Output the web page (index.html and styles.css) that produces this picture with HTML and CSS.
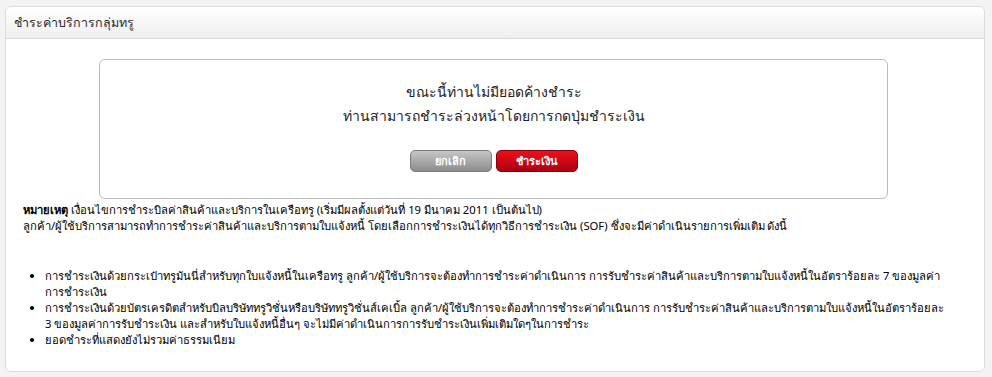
FILE: index.html
```html
<!DOCTYPE html>
<html>
<head>
  <meta charset="utf-8">
  <title>ชำระค่าบริการกลุ่มทรู</title>
  <link rel="stylesheet" href="styles.css">
</head>
<body>
  <div class="panel">
    <div class="panel-head">ชำระค่าบริการกลุ่มทรู</div>
    <div class="panel-body">
      <div class="notice">
        <p class="notice-line">ขณะนี้ท่านไม่มียอดค้างชำระ</p>
        <p class="notice-line">ท่านสามารถชำระล่วงหน้าโดยการกดปุ่มชำระเงิน</p>
        <div class="actions">
          <a href="#" class="btn btn-gray">ยกเลิก</a>
          <a href="#" class="btn btn-red">ชำระเงิน</a>
        </div>
      </div>

      <div class="remark">
        <p><b>หมายเหตุ</b> เงื่อนไขการชำระบิลค่าสินค้าและบริการในเครือทรู (เริ่มมีผลตั้งแต่วันที่ 19 มีนาคม 2011 เป็นต้นไป)<br>
        ลูกค้า/ผู้ใช้บริการสามารถทำการชำระค่าสินค้าและบริการตามใบแจ้งหนี้ โดยเลือกการชำระเงินได้ทุกวิธีการชำระเงิน (SOF) ซึ่งจะมีค่าดำเนินรายการเพิ่มเติม ดังนี้</p>
        <ul>
          <li>การชำระเงินด้วยกระเป๋าทรูมันนี่สำหรับทุกใบแจ้งหนี้ในเครือทรู ลูกค้า/ผู้ใช้บริการจะต้องทำการชำระค่าดำเนินการ การรับชำระค่าสินค้าและบริการตามใบแจ้งหนี้ในอัตราร้อยละ 7 ของมูลค่าการชำระเงิน</li>
          <li>การชำระเงินด้วยบัตรเครดิตสำหรับบิลบริษัททรูวิชั่นหรือบริษัททรูวิชั่นส์เคเบิ้ล ลูกค้า/ผู้ใช้บริการจะต้องทำการชำระค่าดำเนินการ การรับชำระค่าสินค้าและบริการตามใบแจ้งหนี้ในอัตราร้อยละ 3 ของมูลค่าการรับชำระเงิน และสำหรับใบแจ้งหนี้อื่นๆ จะไม่มีค่าดำเนินการการรับชำระเงินเพิ่มเติมใดๆในการชำระ</li>
          <li>ยอดชำระที่แสดงยังไม่รวมค่าธรรมเนียม</li>
        </ul>
      </div>
    </div>
  </div>
</body>
</html>
```

FILE: styles.css
```css
body {
  margin: 0;
  padding: 6px 7px 6px 5px;
  background: #f3f3f3;
  font-family: Tahoma, "Noto Sans", "Liberation Sans", sans-serif;
  color: #000;
}

.panel {
  background: #fff;
  border: 1px solid #dcdcdc;
  border-radius: 6px;
  height: 366px;
  box-sizing: border-box;
}

.panel-head {
  height: 31px;
  line-height: 31px;
  padding-left: 8px;
  font-size: 12.5px;
  color: #2a2a2a;
  background: linear-gradient(#ffffff, #efefef);
  border-bottom: 1px solid #dadada;
  border-radius: 6px 6px 0 0;
}

.panel-body {
  padding: 20px 96px 0 17px;
}

.notice {
  margin-left: 76px;
  width: 789px;
  height: 140px;
  border: 1px solid #b9b9b9;
  border-radius: 6px;
  text-align: center;
  box-sizing: border-box;
  padding-top: 22px;
}

.notice-line {
  margin: 0 0 5px;
  font-size: 14px;
  line-height: 19px;
  color: #222;
}

.actions {
  margin-top: 25px;
  display: flex;
  justify-content: center;
  gap: 4px;
}

.btn {
  display: inline-block;
  width: 80px;
  height: 20px;
  line-height: 20px;
  border-radius: 5px;
  font-size: 11px;
  font-weight: bold;
  color: #fff;
  text-decoration: none;
}

.btn-gray {
  background: linear-gradient(#c6c6c6, #8c8c8c);
  border: 1px solid #7c7c7c;
}

.btn-red {
  background: linear-gradient(#ec1019, #ac0012);
  border: 1px solid #85000f;
}

.remark {
  margin-top: 3px;
  font-size: 11.25px;
  line-height: 16px;
  margin-right: -64px;
}

.remark p {
  margin: 0;
}

.remark ul {
  margin: 34px 0 0;
  padding-left: 22px;
}
```
